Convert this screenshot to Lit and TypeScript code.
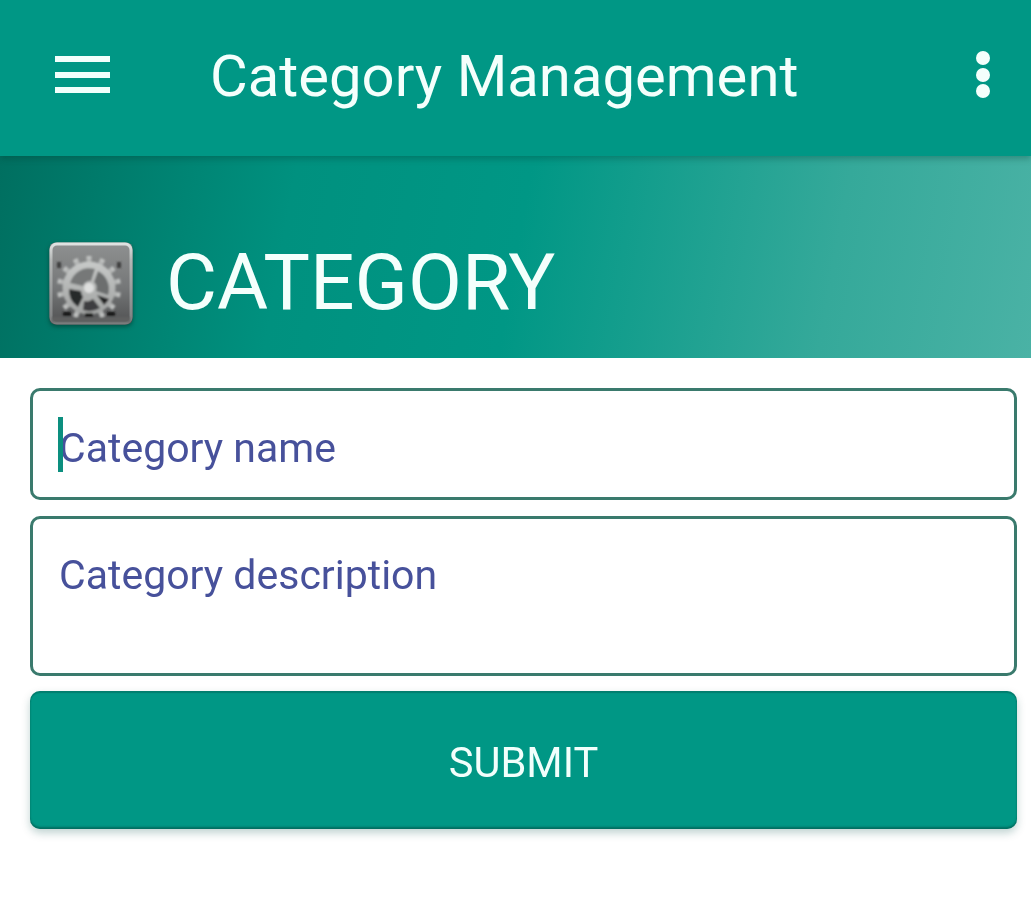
import { LitElement, html, css, svg } from "lit";
import { customElement } from "lit/decorators.js";

const teeth = Array.from({ length: 14 }, (_, i) => (i * 360) / 14);

@customElement("app-root")
export class AppRoot extends LitElement {
  static styles = css`
    :host { display: block; width: 1031px; height: 900px; background: #fff; font-family: Roboto, "Noto Sans", sans-serif; overflow: hidden; filter: blur(0.7px); }
    .toolbar { height: 156px; background: #009785; display: flex; align-items: center; padding: 0 0 0 55px; box-sizing: border-box; color: #f4fffc; position: relative; z-index: 1; box-shadow: 0 3px 6px rgba(0,60,50,.3); }
    .menu { width: 55px; height: 37px; display: flex; flex-direction: column; justify-content: space-between; margin-top: -7px; }
    .menu span { display: block; height: 6px; background: #f2fffc; }
    .title { font-size: 58px; line-height: 1; margin-left: 100px; margin-top: -4px; white-space: nowrap; flex: 1; }
    .dots { width: 14px; display: flex; flex-direction: column; gap: 2.5px; margin-right: 41px; margin-top: -7px; }
    .dots span { width: 14px; height: 14px; border-radius: 50%; background: #f4fffc; }
    .banner { height: 202px; box-sizing: border-box; padding: 86px 0 0 49px; display: flex; align-items: flex-start; background: linear-gradient(100deg, #006f60 0%, #00917f 28%, #009785 50%, #35a99a 80%, #4ab2a5 100%); }
    .gear { width: 84px; height: 84px; flex: none; filter: drop-shadow(0 2px 2px rgba(0,40,30,.5)); }
    .heading { font-size: 78.4px; line-height: 80px; color: #f4fffc; margin-left: 33px; }
    form { padding: 30px 14px 0 30px; display: flex; flex-direction: column; }
    .field { border: 3px solid #3a7a6d; border-radius: 10px; box-sizing: border-box; color: #47519b; font-size: 41px; padding-left: 26px; position: relative; }
    .name { height: 112px; display: flex; align-items: center; padding-top: 7px; }
    .desc { height: 160px; margin-top: 16px; padding-top: 29px; }
    .desc span { display: block; line-height: 1.36; }
    .caret { position: absolute; left: 25px; top: 26px; width: 5px; height: 55px; background: #0c8f7f; }
    .submit { height: 138px; margin-top: 15px; padding-top: 4px; border-radius: 10px; background: #009785; color: #f2fffc; font-size: 41.6px; display: flex; align-items: center; justify-content: center; box-shadow: inset 0 -2px 2px rgba(0,70,60,.5), inset 0 2px 1px rgba(0,70,60,.3), 0 4px 8px rgba(0,80,70,.25); box-sizing: border-box; }
    svg { display: block; }
  `;

  render() {
    return html`
      <div class="toolbar">
        <div class="menu"><span></span><span></span><span></span></div>
        <div class="title">Category Management</div>
        <div class="dots"><span></span><span></span><span></span></div>
      </div>
      <div class="banner">
        <svg class="gear" viewBox="0 0 84 84">
          <defs>
            <linearGradient id="m" x1="0" y1="0" x2="0" y2="1">
              <stop offset="0" stop-color="#8f9191"/><stop offset=".55" stop-color="#757778"/><stop offset="1" stop-color="#505152"/>
            </linearGradient>
            <linearGradient id="w" x1="0" y1="0" x2="0" y2="1">
              <stop offset="0" stop-color="#c8cac9"/><stop offset="1" stop-color="#a0a2a1"/>
            </linearGradient>
            <linearGradient id="f" x1="0" y1="0" x2="0" y2="1">
              <stop offset="0" stop-color="#dfe2e1"/><stop offset=".2" stop-color="#b4b7b6"/><stop offset="1" stop-color="#7d7f80"/>
            </linearGradient>
            <filter id="s"><feGaussianBlur stdDeviation="1"/></filter>
          </defs>
          <rect x="0.5" y="0.5" width="83" height="82" rx="6" fill="url(#m)"/>
          <rect x="2" y="2" width="80" height="79" rx="6" fill="none" stroke="url(#f)" stroke-width="3"/>
          <g filter="url(#s)">
            <g transform="translate(40 46)" fill="url(#w)">
              ${teeth.map((a) => svg`<rect x="-2.5" y="-32" width="5" height="8" transform="rotate(${a})"/>`)}
              <circle r="26.5"/>
              <path d="M-19-5A20 20 0 0 1 6-19L2-7A8 8 0 0 0-6-2Z" fill="#767878"/>
              <path d="M9-17A20 20 0 0 1 19 7L7 3A8 8 0 0 0 5-6Z" fill="#6c6e6e"/>
              <path d="M-20 1L-8 3A10 10 0 0 0-6 9L-11 19A20 20 0 0 1-20 1Z" fill="#28292a"/>
              <path d="M-5 13A10 10 0 0 0 4 11L11 20A20 20 0 0 1-6 22Z" fill="#3d3e3f"/>
              <path d="M8 7L20 11A20 20 0 0 1 15 17Z" fill="#222324"/>
              <circle r="5" fill="#dedfde"/>
            </g>
            <path d="M10 20v6M70 20v6" stroke="#3c3d3e" stroke-width="4"/>
            <rect x="3" y="75" width="78" height="5" fill="#5e6061"/>
            <path d="M14 72h8M36 73h8M58 72h8" stroke="#141516" stroke-width="4"/>
          </g>
        </svg>
        <div class="heading">CATEGORY</div>
      </div>
      <form>
        <div class="field name"><i class="caret"></i>Category name</div>
        <div class="field desc"><span>Category description</span></div>
        <div class="submit">SUBMIT</div>
      </form>
    `;
  }
}
